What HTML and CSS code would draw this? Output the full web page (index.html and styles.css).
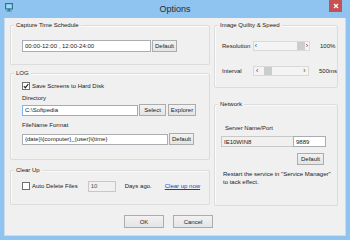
FILE: index.html
```html
<!DOCTYPE html>
<html lang="en">
<head>
    <meta charset="UTF-8">
    <title>Options</title>
    <link rel="stylesheet" href="styles.css">
</head>
<body>
    <div class="window">
        <div class="titlebar">
            <svg class="app-icon" width="8" height="9" viewBox="0 0 8 9">
                <rect x="0.5" y="0.5" width="7" height="5.5" fill="#5fb6d8" stroke="#3a6f8f"/>
                <rect x="1.5" y="1.5" width="5" height="3.5" fill="#9fdcf0"/>
                <rect x="3" y="6" width="2" height="1.5" fill="#3a6f8f"/>
                <rect x="1.5" y="7.5" width="5" height="1" fill="#3a6f8f"/>
            </svg>
            <div class="title">Options</div>
            <div class="close">
                <svg width="6" height="6" viewBox="0 0 6 6">
                    <path d="M1 1 L5 5 M5 1 L1 5" stroke="#fff" stroke-width="1.4"/>
                </svg>
            </div>
        </div>

        <div class="client">
            <div class="columns">
                <div class="col-left">
                    <div class="group capture">
                        <div class="group-title">Capture Time Schedule</div>
                        <div class="row schedule-row">
                            <input class="field schedule" type="text" value="00:00-12:00 , 12:00-24:00">
                            <button class="btn btn-default">Default</button>
                        </div>
                    </div>

                    <div class="group log">
                        <div class="group-title">LOG</div>
                        <label class="check-row">
                            <span class="checkbox checked">
                                <svg width="6" height="6" viewBox="0 0 6 6">
                                    <path d="M0.8 3.2 L2.4 4.8 L5.3 1" fill="none" stroke="#222" stroke-width="1.2"/>
                                </svg>
                            </span>
                            Save Screens to Hard Disk
                        </label>
                        <div class="label dir-label">Directory</div>
                        <div class="row dir-row">
                            <input class="field directory" type="text" value="C:\Softpedia">
                            <button class="btn btn-select">Select</button>
                            <button class="btn btn-explorer">Explorer</button>
                        </div>
                        <div class="label fmt-label">FileName Format</div>
                        <div class="row fmt-row">
                            <input class="field format" type="text" value="{date}\{computer}_{user}\{time}">
                            <button class="btn btn-default">Default</button>
                        </div>
                    </div>

                    <div class="group clear">
                        <div class="group-title">Clear Up</div>
                        <div class="row clear-row">
                            <span class="checkbox"></span>
                            <span class="auto-label">Auto Delete Files</span>
                            <input class="field days" type="text" value="10" disabled>
                            <span class="days-label">Days ago.</span>
                            <a class="link" href="#">Clear up now</a>
                        </div>
                    </div>
                </div>

                <div class="col-right">
                    <div class="group quality">
                        <div class="group-title">Image Quility &amp; Speed</div>
                        <div class="row slider-row res-row">
                            <span class="slider-label">Resolution</span>
                            <div class="slider">
                                <span class="arrow">&lsaquo;</span>
                                <span class="track"><span class="thumb" style="margin-left: 39px"></span></span>
                                <span class="arrow">&rsaquo;</span>
                            </div>
                            <span class="slider-value">100%</span>
                        </div>
                        <div class="row slider-row int-row">
                            <span class="slider-label">Interval</span>
                            <div class="slider">
                                <span class="arrow">&lsaquo;</span>
                                <span class="track"><span class="thumb" style="margin-left: 3px"></span></span>
                                <span class="arrow">&rsaquo;</span>
                            </div>
                            <span class="slider-value">500ms</span>
                        </div>
                    </div>

                    <div class="group network">
                        <div class="group-title">Network</div>
                        <div class="label server-label">Server Name/Port</div>
                        <div class="row server-row">
                            <input class="field server" type="text" value="IE10WIN8" readonly>
                            <input class="field port" type="text" value="9889">
                        </div>
                        <button class="btn btn-net-default">Default</button>
                        <div class="note">Restart the service in "Service Manager"<br>to tack effect.</div>
                    </div>
                </div>
            </div>

            <div class="footer">
                <button class="btn btn-dialog">OK</button>
                <button class="btn btn-dialog">Cancel</button>
            </div>
        </div>
    </div>
</body>
</html>
```

FILE: styles.css
```css
html, body {
    margin: 0;
    padding: 0;
}
body {
    width: 350px;
    height: 240px;
    overflow: hidden;
    font-family: "Liberation Sans", Arial, sans-serif;
    font-size: 6px;
    color: #222;
}
.window {
    width: 350px;
    height: 240px;
    background-color: #8fc4f1;
    display: flex;
    flex-direction: column;
    box-sizing: border-box;
}
.titlebar {
    height: 18px;
    display: flex;
    align-items: flex-start;
    position: relative;
}
.app-icon {
    margin: 3px 0 0 5px;
}
.title {
    flex: 1;
    text-align: center;
    font-size: 9px;
    line-height: 18px;
    color: #2b2b2b;
    margin-right: -8px;
}
.close {
    width: 13px;
    height: 12px;
    margin-right: 8px;
    background-color: #c75050;
    display: flex;
    align-items: center;
    justify-content: center;
}
.client {
    flex: 1;
    margin: 0 4px 4px 4px;
    background-color: #f0f0f0;
    border: 1px solid #c9dcec;
    border-width: 0 1px 1px 1px;
    padding: 7px 7px 0 5px;
}
.columns {
    display: flex;
    gap: 4px;
}
.col-left {
    width: 201px;
    display: flex;
    flex-direction: column;
}
.col-right {
    width: 124px;
    display: flex;
    flex-direction: column;
}
.group {
    border: 1px solid #dcdcdc;
    border-radius: 2px;
    box-shadow: inset 1px 1px 0 #fbfbfb;
    box-sizing: border-box;
}
.group-title {
    width: fit-content;
    line-height: 8px;
    padding: 0 2px;
    margin-top: -5px;
    background-color: #f0f0f0;
}
.row {
    display: flex;
    align-items: center;
}
.field {
    box-sizing: border-box;
    height: 11px;
    margin: 0;
    padding: 0 2px;
    border: 1px solid #abadb3;
    background-color: #fff;
    font-family: "Liberation Sans", Arial, sans-serif;
    font-size: 6px;
    color: #222;
    outline: none;
}
.btn {
    box-sizing: border-box;
    height: 12px;
    margin: 0;
    padding: 0;
    border: 1px solid #acacac;
    background: linear-gradient(#f2f2f2, #e4e4e4);
    font-family: "Liberation Sans", Arial, sans-serif;
    font-size: 6px;
    color: #222;
}
.label {
    line-height: 8px;
}

/* capture time schedule */
.capture {
    height: 40px;
    padding-left: 11px;
}
.capture .group-title {
    margin-left: -8px;
}
.schedule-row {
    margin-top: 11px;
}
.schedule {
    width: 129px;
    height: 12px;
}
.btn-default {
    width: 25px;
    margin-left: 1px;
}

/* log */
.log {
    height: 87px;
    margin-top: 8px;
    padding-left: 11px;
}
.log .group-title {
    margin-left: -8px;
}
.check-row {
    display: flex;
    align-items: center;
    gap: 2px;
    line-height: 8px;
    margin-top: 5px;
}
.checkbox {
    box-sizing: border-box;
    width: 8px;
    height: 8px;
    border: 1px solid #707070;
    background-color: #fff;
    display: flex;
    align-items: center;
    justify-content: center;
}
.dir-label {
    margin-top: 4px;
}
.dir-row {
    margin-top: 2px;
}
.directory {
    width: 116px;
    border-color: #7eb4ea;
}
.btn-select {
    width: 27px;
    margin-left: 1px;
}
.btn-explorer {
    width: 28px;
    margin-left: 2px;
}
.fmt-label {
    margin-top: 5px;
}
.fmt-row {
    margin-top: 4px;
}
.format {
    width: 146px;
}

/* clear up */
.clear {
    height: 35px;
    margin-top: 10px;
    padding-left: 11px;
}
.clear .group-title {
    margin-left: -8px;
}
.clear-row {
    margin-top: 6px;
    height: 12px;
}
.auto-label {
    margin-left: 2px;
}
.days {
    width: 28px;
    margin-left: 10px;
    background-color: #f0f0f0;
    border-color: #c8c8c8;
    color: #555;
}
.days-label {
    margin-left: 9px;
}
.link {
    margin-left: 13px;
    color: #0645c8;
    text-decoration: underline;
}

/* image quality */
.quality {
    height: 63px;
    padding-left: 7px;
}
.quality .group-title {
    margin-left: -4px;
}
.slider-row {
    height: 10px;
}
.res-row {
    margin-top: 12px;
}
.int-row {
    margin-top: 15px;
}
.slider-label {
    width: 31px;
}
.slider {
    box-sizing: border-box;
    width: 57px;
    height: 10px;
    border: 1px solid #d9d9d9;
    background-color: #f4f4f4;
    display: flex;
    align-items: center;
}
.arrow {
    width: 7px;
    text-align: center;
    font-size: 7px;
    line-height: 8px;
    color: #444;
}
.track {
    flex: 1;
    display: flex;
    height: 8px;
}
.thumb {
    width: 8px;
    height: 8px;
    background-color: #cdcdcd;
}
.slider-value {
    margin-left: 10px;
}

/* network */
.network {
    height: 102px;
    margin-top: 16px;
    padding-left: 6px;
}
.network .group-title {
    margin-left: -3px;
}
.server-label {
    margin: 16px 0 0 4px;
}
.server-row {
    margin-top: 4px;
}
.server {
    width: 72px;
    background-color: #f0f0f0;
    border-color: #c8c8c8;
    border-right: none;
}
.port {
    width: 33px;
}
.btn-net-default {
    display: block;
    width: 27px;
    margin: 6px 0 0 76px;
}
.note {
    margin: 5px 0 0 2px;
    line-height: 8px;
}

/* dialog buttons */
.footer {
    display: flex;
    gap: 9px;
    margin-top: 9px;
    padding-left: 114px;
}
.btn-dialog {
    width: 40px;
    height: 13px;
}
```
